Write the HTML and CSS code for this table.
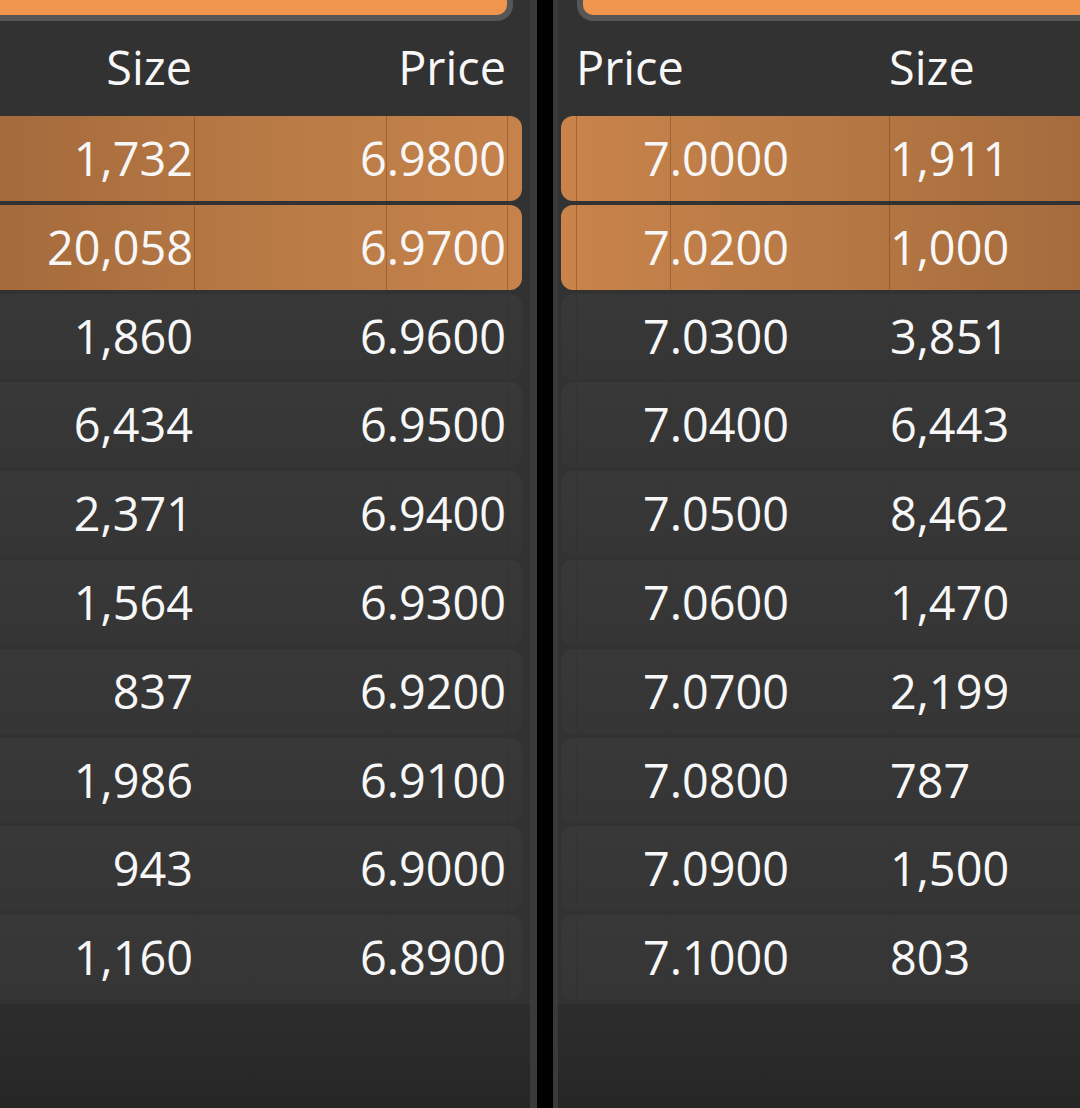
FILE: index.html
```html
<!DOCTYPE html>
<html>
<head>
<meta charset="utf-8">
<link rel="stylesheet" href="styles.css">
</head>
<body>
<div class="book">
  <section class="panel bids">
    <div class="topbar"></div>
    <div class="line head"><div class="c c1">Size</div><div class="c c2"></div><div class="c c3">Price</div><div class="c c4"></div></div>
    <div class="rows">
      <div class="line row hl"><div class="c c1">1,732</div><div class="c c2"></div><div class="c c3">6.9800</div><div class="c c4"></div></div>
      <div class="line row hl"><div class="c c1">20,058</div><div class="c c2"></div><div class="c c3">6.9700</div><div class="c c4"></div></div>
      <div class="line row"><div class="c c1">1,860</div><div class="c c2"></div><div class="c c3">6.9600</div><div class="c c4"></div></div>
      <div class="line row"><div class="c c1">6,434</div><div class="c c2"></div><div class="c c3">6.9500</div><div class="c c4"></div></div>
      <div class="line row"><div class="c c1">2,371</div><div class="c c2"></div><div class="c c3">6.9400</div><div class="c c4"></div></div>
      <div class="line row"><div class="c c1">1,564</div><div class="c c2"></div><div class="c c3">6.9300</div><div class="c c4"></div></div>
      <div class="line row"><div class="c c1">837</div><div class="c c2"></div><div class="c c3">6.9200</div><div class="c c4"></div></div>
      <div class="line row"><div class="c c1">1,986</div><div class="c c2"></div><div class="c c3">6.9100</div><div class="c c4"></div></div>
      <div class="line row"><div class="c c1">943</div><div class="c c2"></div><div class="c c3">6.9000</div><div class="c c4"></div></div>
      <div class="line row"><div class="c c1">1,160</div><div class="c c2"></div><div class="c c3">6.8900</div><div class="c c4"></div></div>
    </div>
    <div class="filler"></div>
  </section>
  <div class="gap"></div>
  <section class="panel asks">
    <div class="topbar"></div>
    <div class="line head"><div class="c c1"></div><div class="c c2">Price</div><div class="c c3"></div><div class="c c4">Size</div></div>
    <div class="rows">
      <div class="line row hl"><div class="c c1"></div><div class="c c2 p">7.0000</div><div class="c c3"></div><div class="c c4">1,911</div></div>
      <div class="line row hl"><div class="c c1"></div><div class="c c2 p">7.0200</div><div class="c c3"></div><div class="c c4">1,000</div></div>
      <div class="line row"><div class="c c1"></div><div class="c c2 p">7.0300</div><div class="c c3"></div><div class="c c4">3,851</div></div>
      <div class="line row"><div class="c c1"></div><div class="c c2 p">7.0400</div><div class="c c3"></div><div class="c c4">6,443</div></div>
      <div class="line row"><div class="c c1"></div><div class="c c2 p">7.0500</div><div class="c c3"></div><div class="c c4">8,462</div></div>
      <div class="line row"><div class="c c1"></div><div class="c c2 p">7.0600</div><div class="c c3"></div><div class="c c4">1,470</div></div>
      <div class="line row"><div class="c c1"></div><div class="c c2 p">7.0700</div><div class="c c3"></div><div class="c c4">2,199</div></div>
      <div class="line row"><div class="c c1"></div><div class="c c2 p">7.0800</div><div class="c c3"></div><div class="c c4">787</div></div>
      <div class="line row"><div class="c c1"></div><div class="c c2 p">7.0900</div><div class="c c3"></div><div class="c c4">1,500</div></div>
      <div class="line row"><div class="c c1"></div><div class="c c2 p">7.1000</div><div class="c c3"></div><div class="c c4">803</div></div>
    </div>
    <div class="filler"></div>
  </section>
</div>
</body>
</html>
```
FILE: styles.css
```css
html, body {
  margin: 0;
  padding: 0;
  background: #000;
}
body {
  width: 1080px;
  height: 1108px;
  overflow: hidden;
  font-family: "Open Sans", "Noto Sans", sans-serif;
  color: #f7f7f7;
}
.book {
  display: flex;
  height: 1108px;
}
.panel {
  display: flex;
  flex-direction: column;
  background: #323232;
  height: 100%;
}
.bids {
  width: 530px;
  border-right: 7px solid #3a3a3a;
}
.gap {
  width: 16px;
  background: #000;
}
.asks {
  flex: 1;
  border-left: 5px solid #3a3a3a;
  padding-left: 3px;
}
.topbar {
  height: 15px;
  background: #f0954d;
  border-bottom: 6px solid #565656;
}
.bids .topbar {
  width: 507px;
  border-right: 6px solid #565656;
  border-bottom-right-radius: 16px;
}
.asks .topbar {
  margin-left: 16px;
  border-left: 6px solid #565656;
  border-bottom-left-radius: 16px;
}
.line {
  display: grid;
  align-items: center;
  font-size: 46.8px;
  line-height: 1;
  white-space: nowrap;
}
.bids .line {
  width: 522px;
  grid-template-columns: 194px 192px 121px 15px;
}
.asks .line {
  grid-template-columns: 15px 94px 219px 1fr;
}
.head {
  height: 90px;
  margin-top: 1px;
  margin-bottom: 4px;
}
.c {
  height: 100%;
  display: flex;
  align-items: center;
  box-sizing: border-box;
}
.bids .c1, .bids .c3 {
  justify-content: flex-end;
  padding-right: 1px;
}
.bids .head .c1 { padding-right: 2px; }
.asks .c2 { padding-left: 0; }
.asks .c2.p { padding-left: 66px; }
.asks .c4 { padding-left: 0; }
.rows {
  display: flex;
  flex-direction: column;
  gap: 3.8px;
}
.row {
  height: 85px;
  background: linear-gradient(#383838, #353535);
}
.bids .row { border-radius: 0 12px 12px 0; }
.asks .row { border-radius: 12px 0 0 12px; }
.row .c2, .row .c3, .row .c4 {
  border-left: 1px solid rgba(0, 0, 0, 0.05);
}
.row.hl .c2, .row.hl .c3, .row.hl .c4 {
  border-left: 1px solid rgba(90, 50, 20, 0.35);
}
.bids .row.hl {
  background: linear-gradient(90deg, #a56a3c 0%, #b87a45 50%, #c6824b 100%);
}
.asks .row.hl {
  background: linear-gradient(90deg, #c9834b 0%, #b57844 55%, #a66b3d 100%);
}
.filler {
  flex: 1;
  margin-top: 4px;
  background: linear-gradient(#2d2d2d, #262626);
}
.asks .filler { margin-left: -3px; }
```
